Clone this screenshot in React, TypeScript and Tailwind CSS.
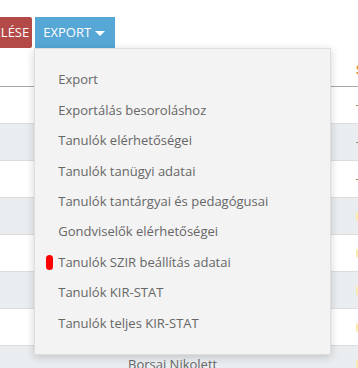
import React from "react";

const menuItems = [
  "Export",
  "Exportálás besoroláshoz",
  "Tanulók elérhetőségei",
  "Tanulók tanügyi adatai",
  "Tanulók tantárgyai és pedagógusai",
  "Gondviselők elérhetőségei",
  "Tanulók SZIR beállítás adatai",
  "Tanulók KIR-STAT",
  "Tanulók teljes KIR-STAT",
];

type Row = { name?: string; mark: "dash" | "badge" };

const rows: Row[] = [
  { mark: "dash" },
  { mark: "dash" },
  { mark: "dash" },
  { mark: "badge" },
  { mark: "badge" },
  { mark: "badge" },
  { mark: "badge" },
  { name: "Borsai Nikolett", mark: "badge" },
];

const App = () => {
  return (
    <div
      className="relative w-[358px] h-[368px] overflow-hidden bg-white text-[13px]"
      style={{ fontFamily: '"Open Sans", "Liberation Sans", sans-serif' }}
    >
      {/* Toolbar */}
      <div className="flex items-start gap-[3px] pt-[17px] h-[48px]">
        <button className="-ml-[35px] h-[31px] pl-[6px] pr-[3px] rounded-r-[2px] bg-[#b44a47] text-white uppercase leading-[31px]">
          KEZELÉSE
        </button>
        <div className="relative">
          <button className="flex items-center gap-[4px] h-[31px] pl-[8px] pr-[10px] bg-[#56a6d6] text-white leading-[31px]">
            EXPORT
            <span className="mt-[2px] w-0 h-0 border-l-[5px] border-r-[5px] border-t-[5px] border-l-transparent border-r-transparent border-t-white" />
          </button>

          {/* Dropdown */}
          <div className="absolute left-[-1px] top-[31px] z-10 w-[297px] pt-[16px] pb-[15px] bg-[#f3f3f3] border border-[#dedede] shadow-[0_2px_8px_rgba(0,0,0,0.18)]">
            {menuItems.map((item) => (
              <div
                key={item}
                className="relative h-[30.4px] pl-[23px] flex items-center text-[#666]"
              >
                {item === "Tanulók SZIR beállítás adatai" && (
                  <span className="absolute left-[11px] top-[8px] w-[7px] h-[15px] rounded-full bg-[#ff0000]" />
                )}
                {item}
              </div>
            ))}
          </div>
        </div>
      </div>

      {/* Table behind */}
      <div className="w-[420px]">
        <div className="flex h-[39px] border-b border-[#a8a8a8]">
          <div className="w-[356px]" />
          <div className="pt-[12px] font-bold text-[#e08b35]">S</div>
        </div>
        {rows.map((row, i) => (
          <div
            key={i}
            className={`flex h-[37px] border-b border-[#dcdcdc] ${
              i % 2 === 1 ? "bg-[#eaedf0]" : "bg-white"
            }`}
          >
            <div className="w-[128px]" />
            <div className="w-[228px] pt-[3px] text-[#666] leading-[30px]">
              {row.name}
            </div>
            <div className="flex items-center">
              {row.mark === "dash" ? (
                <span className="block w-[8px] h-[1px] bg-[#9a8760]" />
              ) : (
                <span className="block w-[20px] h-[9px] rounded-[2px] bg-[#fbeab0]" />
              )}
            </div>
          </div>
        ))}
      </div>
    </div>
  );
};

export default App;
